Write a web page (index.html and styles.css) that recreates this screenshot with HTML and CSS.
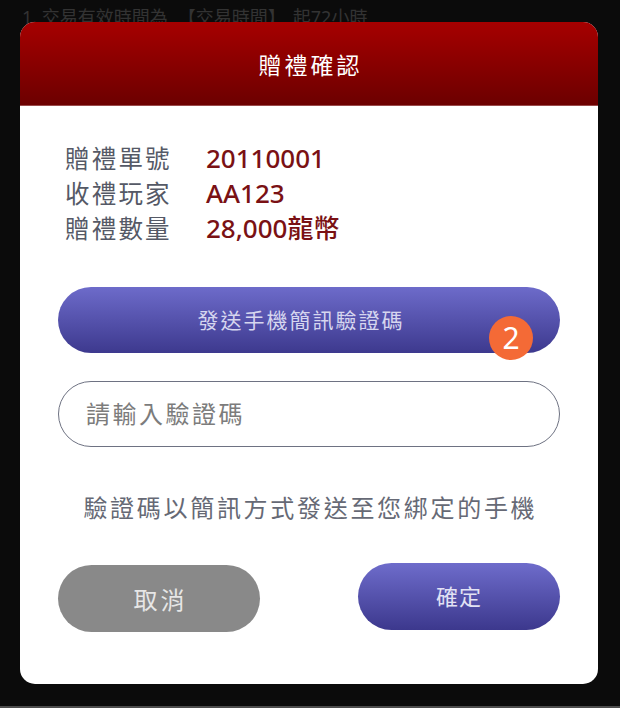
FILE: index.html
```html
<!DOCTYPE html>
<html lang="zh-Hant">
<head>
<meta charset="utf-8">
<title>贈禮確認</title>
<link rel="stylesheet" href="styles.css">
</head>
<body>
<div class="page">
  <p class="bg-text">1. 交易有效時間為<span class="br-open">【</span>交易時間<span class="br-close">】</span>起72小時</p>
  <div class="modal">
    <div class="modal-header">贈禮確認</div>
    <div class="modal-body">
      <div class="info">
        <span class="label">贈禮單號</span><span class="value">20110001</span>
        <span class="label">收禮玩家</span><span class="value">AA123</span>
        <span class="label">贈禮數量</span><span class="value">28,000龍幣</span>
      </div>
      <div class="send-wrap">
        <button class="btn btn-send">發送手機簡訊驗證碼</button>
        <span class="badge">2</span>
      </div>
      <input class="code-input" type="text" placeholder="請輸入驗證碼">
      <p class="note">驗證碼以簡訊方式發送至您綁定的手機</p>
      <div class="actions">
        <button class="btn btn-cancel">取消</button>
        <button class="btn btn-confirm">確定</button>
      </div>
    </div>
  </div>
</div>
</body>
</html>
```
FILE: styles.css
```css
* { box-sizing: border-box; }
html, body {
  margin: 0;
  padding: 0;
  background: #0b0b0b;
}
body {
  font-family: "Noto Sans", "Noto Sans CJK TC", sans-serif;
}
.page {
  position: relative;
  width: 620px;
  height: 708px;
  overflow: hidden;
  border-bottom: 2px solid #4d4d4d;
}
.bg-text {
  margin: 0;
  padding: 4px 0 0 22px;
  font-size: 18px;
  line-height: 26px;
  color: #333333;
  white-space: nowrap;
}
.br-open {
  margin-left: 10px;
}
.br-close {
  margin-right: 7px;
}
.modal {
  position: absolute;
  left: 20px;
  top: 22px;
  width: 578px;
  background: #fff;
  border-radius: 15px;
  overflow: hidden;
}
.modal-header {
  height: 84px;
  display: flex;
  align-items: center;
  justify-content: center;
  padding-left: 3px;
  background: linear-gradient(to bottom, #a60000, #6c0000);
  color: #fff;
  font-size: 23px;
  letter-spacing: 3px;
  border-bottom: 1px solid #9a4a4a;
}
.modal-body {
  padding: 35px 38px 52px;
  display: flex;
  flex-direction: column;
}
.info {
  display: grid;
  grid-template-columns: 141px auto;
  padding-left: 7px;
  line-height: 35px;
}
.label {
  font-size: 24.5px;
  letter-spacing: 2.2px;
  color: #555966;
}
.value {
  font-size: 26px;
  font-weight: 500;
  color: #7a1114;
}
.send-wrap {
  position: relative;
  margin-top: 41px;
}
.btn {
  border: none;
  border-radius: 999px;
  font-family: "Noto Sans", "Noto Sans CJK TC", sans-serif;
  cursor: pointer;
  display: flex;
  align-items: center;
  justify-content: center;
  padding: 0;
}
.btn-send {
  width: 100%;
  height: 66px;
  background: linear-gradient(to bottom, #6d6bca, #3d398e);
  color: #d6d6ef;
  font-size: 21px;
  letter-spacing: 2px;
  padding-right: 16px;
  padding-bottom: 3px;
}
.badge {
  position: absolute;
  right: 27px;
  top: 29px;
  width: 44px;
  height: 44px;
  border-radius: 50%;
  background: #f46a36;
  color: #fff;
  font-size: 30px;
  line-height: 44px;
  text-align: center;
}
.code-input {
  margin-top: 28px;
  height: 66px;
  width: 100%;
  border: 1.5px solid #6e7282;
  border-radius: 999px;
  padding: 0 0 2px 27px;
  font-family: "Noto Sans", "Noto Sans CJK TC", sans-serif;
  font-size: 24px;
  letter-spacing: 2.5px;
  color: #333;
  background: #fff;
  outline: none;
}
.code-input::placeholder {
  color: #7c7c7c;
}
.note {
  margin: 44px 0 0;
  padding-left: 2.7px;
  text-align: center;
  font-size: 24px;
  line-height: 34px;
  letter-spacing: 2.7px;
  color: #666975;
}
.actions {
  margin-top: 38px;
  display: flex;
  justify-content: space-between;
  align-items: flex-start;
  height: 69px;
}
.btn-cancel {
  margin-top: 2px;
  width: 202px;
  height: 67px;
  background: #898989;
  color: #e6e6e6;
  font-size: 24px;
  letter-spacing: 3px;
  padding-left: 3px;
}
.btn-confirm {
  width: 202px;
  height: 67px;
  background: linear-gradient(to bottom, #6e6ccb, #3c388d);
  color: #e2e2f4;
  font-size: 22px;
  letter-spacing: 1px;
  padding-bottom: 4px;
}
```
